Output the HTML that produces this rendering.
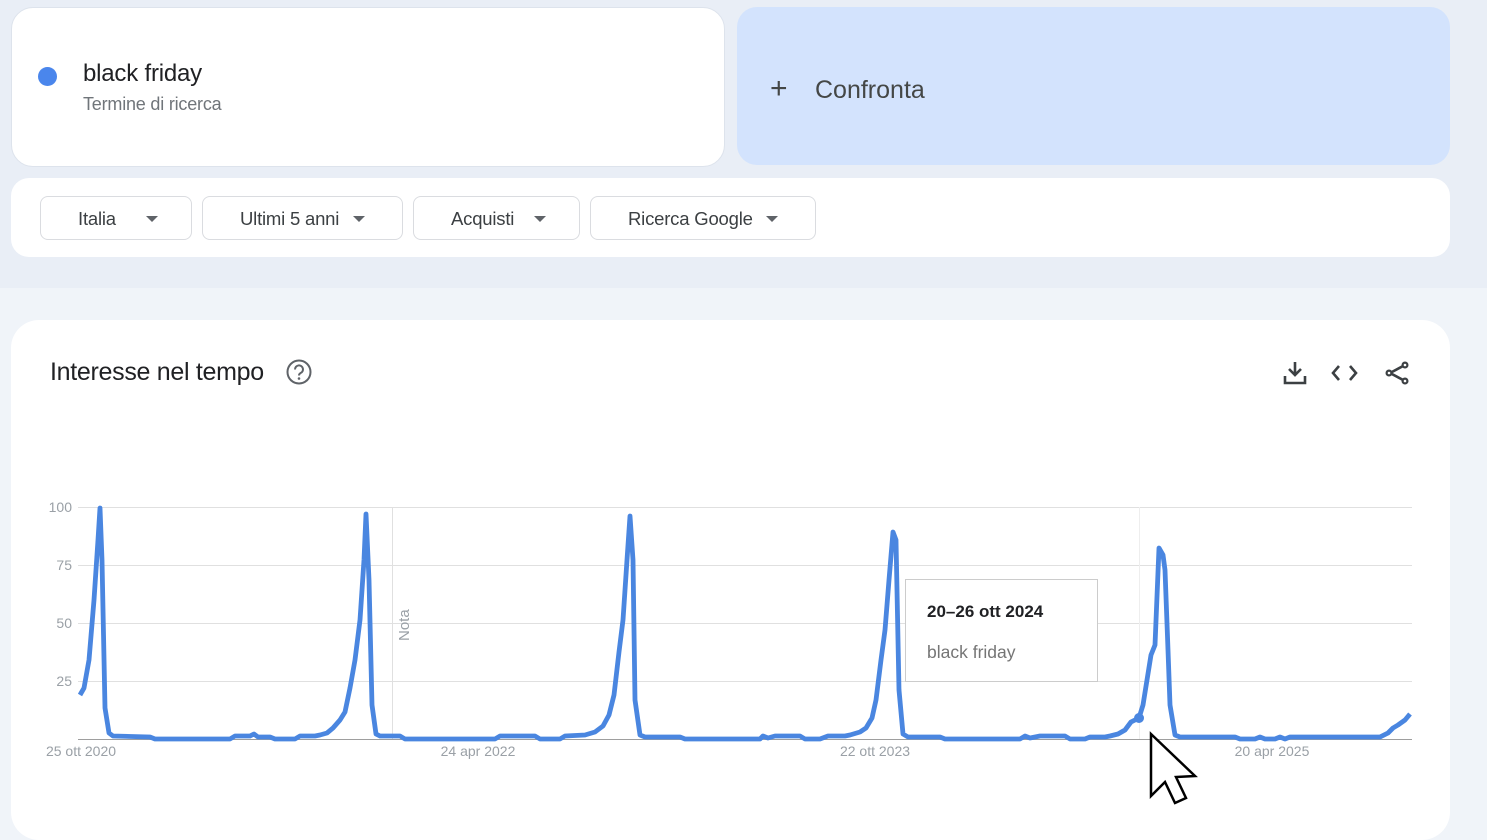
<!DOCTYPE html>
<html><head><meta charset="utf-8"><style>
*{margin:0;padding:0;box-sizing:border-box}
body{width:1487px;height:814px;overflow:hidden;background:#f0f4f9;font-family:"Liberation Sans",Arial,sans-serif;position:relative}
.top{position:absolute;left:0;top:0;width:1487px;height:288px;background:#e9eef6}
.card{position:absolute;background:#fff;border-radius:22px}
.chip{position:absolute;top:196px;height:44px;border:1px solid #dadce0;border-radius:8px;background:#fff;font-size:18.5px;color:#3c4043;line-height:44px;letter-spacing:-0.2px}
.chip span.t{position:absolute;top:0}
.tri{position:absolute;top:19px;width:0;height:0;border-left:6px solid transparent;border-right:6px solid transparent;border-top:6px solid #5f6368}
</style></head><body>
<div class="top"></div>
<div class="card" style="left:11px;top:7px;width:714px;height:160px;border:1px solid #dde3ec"></div>
<div style="position:absolute;left:38px;top:67px;width:19px;height:19px;border-radius:50%;background:#4a86ec"></div>
<div style="position:absolute;left:83px;top:60px;font-size:24px;color:#202124;letter-spacing:-0.2px">black friday</div>
<div style="position:absolute;left:83px;top:94px;font-size:18px;color:#70757a;letter-spacing:-0.2px">Termine di ricerca</div>
<div style="position:absolute;left:737px;top:7px;width:713px;height:158px;border-radius:20px;background:#d3e3fd"></div>
<div style="position:absolute;left:770px;top:72px;font-size:30px;color:#444746;font-weight:300">+</div>
<div style="position:absolute;left:815px;top:76px;font-size:25px;color:#444746">Confronta</div>
<div class="card" style="left:11px;top:178px;width:1439px;height:79px;border-radius:18px"></div>
<div class="chip" style="left:40px;width:152px"><span class="t" style="left:37px">Italia</span><div class="tri" style="left:105px"></div></div>
<div class="chip" style="left:202px;width:201px"><span class="t" style="left:37px">Ultimi 5 anni</span><div class="tri" style="left:150px"></div></div>
<div class="chip" style="left:413px;width:167px"><span class="t" style="left:37px">Acquisti</span><div class="tri" style="left:120px"></div></div>
<div class="chip" style="left:590px;width:226px"><span class="t" style="left:37px">Ricerca Google</span><div class="tri" style="left:175px"></div></div>
<div class="card" style="left:11px;top:320px;width:1439px;height:520px;border-radius:28px"></div>
<div style="position:absolute;left:50px;top:358px;font-size:25px;color:#202124;letter-spacing:-0.3px">Interesse nel tempo</div>
<svg style="position:absolute;left:285px;top:358px" width="28" height="28" viewBox="0 0 28 28"><circle cx="14" cy="14" r="11.5" fill="none" stroke="#5f6368" stroke-width="2"/><path d="M10 11.5a4 4 0 1 1 5.5 3.6c-1 .5-1.5 1.2-1.5 2.4" fill="none" stroke="#5f6368" stroke-width="2"/><circle cx="14" cy="20.5" r="1.3" fill="#5f6368"/></svg>
<svg style="position:absolute;left:1280px;top:358px" width="130" height="30" viewBox="0 0 130 30">
<g fill="none" stroke="#3c4043" stroke-width="2.6"><path d="M15 4v13M9 11l6 6 6-6M5 18v7h20v-7"/><path d="M59 8l-6 7 6 7M70 8l6 7-6 7"/><path d="M110 15l15-8M110 15l15 8"/></g><g fill="#3c4043"><circle cx="125" cy="7" r="3.5"/><circle cx="109" cy="15" r="3.5"/><circle cx="125" cy="23" r="3.5"/></g><g fill="#fff"><circle cx="125" cy="7" r="1.3"/><circle cx="109" cy="15" r="1.3"/><circle cx="125" cy="23" r="1.3"/></g></svg>
<svg style="position:absolute;left:0;top:0" width="1487" height="814">
<g stroke="#e0e0e0" stroke-width="1"><line x1="78" y1="507.5" x2="1412" y2="507.5"/><line x1="78" y1="565.5" x2="1412" y2="565.5"/><line x1="78" y1="623.5" x2="1412" y2="623.5"/><line x1="78" y1="681.5" x2="1412" y2="681.5"/><line x1="392.5" y1="507" x2="392.5" y2="739"/><line x1="1139.5" y1="507" x2="1139.5" y2="739" stroke="#eee"/></g>
<line x1="78" y1="739.5" x2="1412" y2="739.5" stroke="#9e9e9e"/>
<g font-size="14" fill="#9aa0a6" font-family="Liberation Sans,sans-serif"><text x="72" y="512" text-anchor="end">100</text><text x="72" y="570" text-anchor="end">75</text><text x="72" y="628" text-anchor="end">50</text><text x="72" y="686" text-anchor="end">25</text>
<text x="81" y="756" text-anchor="middle">25 ott 2020</text><text x="478" y="756" text-anchor="middle">24 apr 2022</text><text x="875" y="756" text-anchor="middle">22 ott 2023</text><text x="1272" y="756" text-anchor="middle">20 apr 2025</text>
<text transform="translate(409,641) rotate(-90)" font-size="15">Nota</text></g>
<polyline fill="none" stroke="#4a86e0" stroke-width="4.8" stroke-linejoin="round" points="80,695 84,688 89,660 94,600 98,540 100,508 102,560 105,708 109,733 113,736 150,737 155,739 230,739 235,736 250,736 254,734 258,737 270,737 275,739 295,739 300,736 315,736 320,735 327,733 333,728 340,720 345,712 350,688 355,660 360,620 364,560 366,514 369,580 372,705 376,734 380,736 400,736 405,739 495,739 500,736 535,736 540,739 560,739 565,736 585,735 595,732 603,726 609,715 614,695 619,652 623,620 627,560 630,516 633,560 635,700 640,735 645,737 680,737 685,739 760,739 763,736 768,738 775,736 800,736 805,739 820,739 828,736 845,736 850,735 860,732 866,728 872,718 876,700 881,660 885,630 889,580 893,532 896,540 899,690 903,734 908,737 940,737 945,739 1020,739 1025,736 1030,738 1040,736 1065,736 1070,739 1085,739 1090,737 1105,737 1110,736 1118,734 1125,730 1131,722 1139,718 1143,705 1147,680 1151,655 1155,645 1159,548 1163,555 1165,570 1168,650 1170,705 1175,735 1180,737 1235,737 1240,739 1255,739 1260,737 1265,739 1275,739 1280,737 1285,739 1290,737 1380,737 1388,733 1393,728 1398,725 1405,720 1410,714"/>
<circle cx="1139" cy="718" r="5" fill="#4a86e0"/>
<rect x="905.5" y="579.5" width="192" height="102" fill="#fff" stroke="#ccc"/>
<text x="927" y="617" font-size="17" font-weight="bold" fill="#202124" font-family="Liberation Sans,sans-serif">20–26 ott 2024</text>
<text x="927" y="658" font-size="17.5" fill="#757575" font-family="Liberation Sans,sans-serif">black friday</text>
<path d="M1151 734 L1151 796 L1165 782 L1175 803 L1186 798 L1176 777 L1195 776 Z" fill="#fff" stroke="#000" stroke-width="2.5" stroke-linejoin="miter"/>
</svg>
</body></html>
